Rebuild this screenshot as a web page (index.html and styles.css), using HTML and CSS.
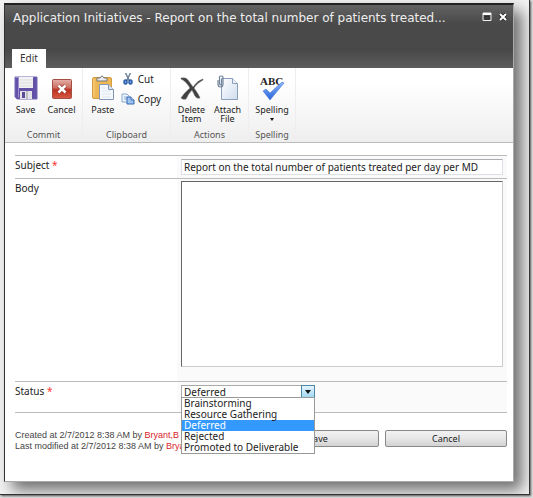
FILE: index.html
```html
<!DOCTYPE html>
<html lang="en">
<head>
<meta charset="utf-8">
<title>Application Initiatives</title>
<link rel="stylesheet" href="styles.css">
</head>
<body>
<div class="frame">
<main class="dialog">
  <header class="header">
    <div class="titlebar">
      <h1 class="title">Application Initiatives - Report on the total number of patients treated...</h1>
      <button class="winbtn" type="button" aria-label="Maximize"><svg width="10" height="10" viewBox="0 0 10 10"><path d="M1 1h8v7.500h-8z" fill="#444" stroke="#eee"/><path d="M1 2h8" stroke="#fff" stroke-width="2"/><path d="M3 4.500h4v2.500h-4z" fill="none" stroke="#222" stroke-width=".7"/></svg></button>
      <button class="winbtn" type="button" aria-label="Close"><svg width="10" height="10" viewBox="0 0 10 10"><path d="M2 2l6 6M8 2L2 8" stroke="#222" stroke-width="3.500"/><path d="M2 2l6 6M8 2L2 8" stroke="#fff" stroke-width="2"/></svg></button>
    </div>
    <nav class="tabs"><a class="tab" href="#ribbon">Edit</a></nav>
  </header>

  <section class="ribbon" id="ribbon">
    <div class="group commit">
      <div class="tools">
        <button class="tool" type="button">
          <svg width="24" height="24" viewBox="0 0 24 24"><path d="M1 1h22v22H3l-2-2z" fill="#6251a6" stroke="#7567b4"/><path d="M5 1h14v11H5z" fill="#f2f2f4"/><path d="M5 4h14M5 7h14M5 10h14" stroke="#ddd"/><path d="M1.500 1.500h3v20" fill="none" stroke="#9c90cf"/><path d="M6 15h12v8H6z" fill="#e4e3ea"/><path d="M8 16h3v6H8z" fill="#5d4b99"/><path d="M13 15v8" stroke="#999"/></svg>
          <span>Save</span></button>
        <button class="tool" type="button">
          <svg width="24" height="24" viewBox="0 0 24 24"><defs><linearGradient id="red" x2="0" y2="1"><stop stop-color="#e5afa7"/><stop offset=".42" stop-color="#ce7064"/><stop offset=".55" stop-color="#bd3020"/><stop offset="1" stop-color="#d75a45"/></linearGradient></defs><rect x="2.500" y="3.500" width="19" height="19" rx="1" fill="url(#red)" stroke="#a44d43"/><path d="M8.500 9.500l7 7M15.500 9.500l-7 7" stroke="#9b3025" stroke-width="4"/><path d="M8.500 9.500l7 7M15.500 9.500l-7 7" stroke="#fff" stroke-width="2.500"/></svg>
          <span>Cancel</span></button>
      </div>
      <h2 class="caption">Commit</h2>
    </div>
    <div class="group clipboard">
      <div class="tools">
        <button class="tool" type="button">
          <svg width="24" height="26" viewBox="0 0 24 26"><rect x="1.500" y="2.500" width="19" height="21" rx="1.500" fill="#edb755" stroke="#d79c3c"/><path d="M3 4v18" stroke="#f7d68c"/><path d="M6 3h3q2-4 4 0h3v3H6z" fill="#e8ecef" stroke="#777"/><path d="M8.500 9.500h9l5 5v10h-14z" fill="#f5f8fc" stroke="#8396b3"/><path d="M17.500 9.500v5h5" fill="#dbe5f0" stroke="#8396b3"/><path d="M11 13h4M11 16h9M11 19h9M11 22h9" stroke="#dfe6ef"/></svg>
          <span>Paste</span></button>
        <div class="small-tools">
          <button class="small" type="button"><svg width="14" height="12" viewBox="0 0 14 12"><path d="M4.500 0l4 8M9.500 0l-4 8" stroke="#718096" stroke-width="1.500"/><ellipse cx="4.500" cy="9" rx="1.500" ry="2" fill="#7ea3d8" stroke="#285aa8" stroke-width="1.500"/><ellipse cx="9.500" cy="9" rx="1.500" ry="2" fill="#7ea3d8" stroke="#285aa8" stroke-width="1.500"/></svg><span>Cut</span></button>
          <button class="small" type="button"><svg width="14" height="12" viewBox="0 0 14 12"><path d="M1 1h5l2 2v6H1z" fill="#edf4fc" stroke="#8aaad0"/><path d="M3 4h3M3 6h3" stroke="#8baddb"/><path d="M6 4h4l3 3v4H6z" fill="#9fc4f2" stroke="#3468b2"/><path d="M10 4v3h3" fill="#eaf3ff" stroke="#3468b2"/></svg><span>Copy</span></button>
        </div>
      </div>
      <h2 class="caption">Clipboard</h2>
    </div>
    <div class="group actions">
      <div class="tools">
        <button class="tool" type="button">
          <svg width="24" height="24" viewBox="0 0 24 24"><path d="M1 2q5-1 7 2l5 7Q18 4 23 3v1q-6 3-9 8 5 7 6 10-3 1-5-2l-3-6q-4 4-6 9-3 1-5-1Q4 17 10 12 6 5 1 3z" fill="#414141" stroke="#666" stroke-width=".5"/></svg>
          <span>Delete<br>Item</span></button>
        <button class="tool" type="button">
          <svg width="24" height="26" viewBox="0 0 24 26"><defs><linearGradient id="paper" x2="1" y2="1"><stop stop-color="#fff"/><stop offset="1" stop-color="#cfdced"/></linearGradient></defs><path d="M5.500 3.500h11l5 5v16h-16z" fill="url(#paper)" stroke="#8b9ebc"/><path d="M16.500 3.500v5h5" fill="#edf3fa" stroke="#8b9ebc"/><path d="M2 5v4q0 3 2.500 3T7 9V3Q7 1 5 1T3.500 3v5q0 2 1 2t1-2V4" fill="none" stroke="#70849a" stroke-width="1.200"/></svg>
          <span>Attach<br>File</span></button>
      </div>
      <h2 class="caption">Actions</h2>
    </div>
    <div class="group spelling">
      <div class="tools">
        <button class="tool" type="button">
          <svg width="26" height="26" viewBox="0 0 26 26"><defs><linearGradient id="blue" x2="0" y2="1"><stop stop-color="#8bb8fb"/><stop offset="1" stop-color="#2763db"/></linearGradient></defs><text x="1" y="10" class="abc">ABC</text><path d="M4 16l3-2 4 4L23 7l2 1-14 17z" fill="url(#blue)" stroke="#4d7bd1" stroke-width=".6"/></svg>
          <span>Spelling</span><i class="arrow"></i></button>
      </div>
      <h2 class="caption">Spelling</h2>
    </div>
  </section>

  <form class="form">
    <div class="row">
      <label for="subject">Subject <b>*</b></label>
      <div class="field"><input id="subject" type="text" value="Report on the total number of patients treated per day per MD"></div>
    </div>
    <div class="row body-row">
      <label for="body">Body</label>
      <div class="field"><textarea id="body"></textarea></div>
    </div>
    <div class="row status-row">
      <label for="status">Status <b>*</b></label>
      <div class="field">
        <div class="combo">
          <select id="status"><option>Brainstorming</option><option>Resource Gathering</option><option selected>Deferred</option><option>Rejected</option><option>Promoted to Deliverable</option></select>
          <span class="drop"><i class="arrow"></i></span>
          <ul class="menu" role="listbox" aria-label="Status">
            <li role="option">Brainstorming</li>
            <li role="option">Resource Gathering</li>
            <li role="option" class="selected" aria-selected="true">Deferred</li>
            <li role="option">Rejected</li>
            <li role="option">Promoted to Deliverable</li>
          </ul>
        </div>
      </div>
    </div>
    <div class="footer">
      <p class="meta">Created at 2/7/2012 8:38 AM by <a href="#author">Bryant,B</a><br>Last modified at 2/7/2012 8:38 AM by <a href="#author">Brya</a></p>
      <button class="push" type="button">Save</button>
      <button class="push" type="button">Cancel</button>
    </div>
  </form>
</main>
</div>
</body>
</html>
```
FILE: styles.css
```css
* { box-sizing: border-box; }

body {
  margin: 0;
  padding: 0 3px 3px 0;
  min-height: 100vh;
  display: flex;
  background: #dedede;
  color: #222;
  font: 10px/11px "Noto Sans", Verdana, sans-serif;
  overflow: hidden;
}

button {
  font: inherit;
  color: inherit;
  border: 0;
  padding: 0;
  background: none;
}

a { text-decoration: none; }
svg { display: block; flex: none; }

.frame {
  flex: 1;
  display: flex;
  padding: 3px 15px 12px 4px;
  background: #f3f3f3;
  border-right: 1px solid #333;
  border-bottom: 1px solid #333;
  box-shadow: 1px 1px 2px #555;
  overflow: hidden;
}

.dialog {
  flex: 1;
  min-width: 0;
  display: flex;
  flex-direction: column;
  background: #fff;
  border: 1px solid #aaa;
  border-left-color: #333;
  border-top: 2px solid #222;
  box-shadow: 8px 8px 14px rgba(0, 0, 0, .55);
}

.header {
  height: 63px;
  display: flex;
  flex-direction: column;
  justify-content: space-between;
  background: linear-gradient(#626262, #494949 30%, #484848 70%, #5c5c5c);
}

.titlebar {
  display: flex;
  align-items: center;
  gap: 6px;
  padding: 2px 5px 0 8px;
}

.winbtn { padding-bottom: 3px; }

.title {
  flex: 1;
  margin: 0;
  color: #eee;
  font-family: "DejaVu Sans", Verdana, sans-serif;
  font-size: 12px;
  font-weight: 400;
  line-height: 22px;
  white-space: nowrap;
}

.tabs { display: flex; padding-left: 7px; }

.tab {
  padding: 0 8px;
  background: #fff;
  color: #333;
  font-size: 10px;
  line-height: 19px;
}

.ribbon {
  height: 75px;
  display: flex;
  background: linear-gradient(#fff 20%, #eee);
  border-bottom: 1px solid #bbb;
  font-size: 9px;
}

.group {
  display: flex;
  flex-direction: column;
  justify-content: space-between;
  border-right: 1px solid #eee;
}

.commit { width: 78px; }
.clipboard { width: 88px; }
.actions { width: 78px; }
.spelling { width: 47px; }

.tools {
  display: flex;
  justify-content: center;
  padding-top: 7px;
}

.clipboard .tools { padding-top: 5px; padding-right: 7px; }
.clipboard .tool { padding-top: 2px; }

.tool {
  width: 36px;
  display: flex;
  flex-direction: column;
  align-items: center;
  line-height: 9px;
}

.tool svg { height: 26px; }
.tool span { padding-top: 4px; }

.small-tools {
  display: flex;
  flex-direction: column;
  gap: 8px;
}

.small {
  display: flex;
  align-items: center;
  gap: 3px;
  font-size: 10px;
  line-height: 12px;
}

.arrow {
  border: 2px solid transparent;
  border-top: 3px solid #111;
  border-bottom: 0;
}

.tool .arrow { margin-top: 4px; }

.abc { font: bold 11px "Liberation Serif", serif; fill: #222; }

.caption {
  margin: 0;
  color: #555;
  font-size: 9px;
  font-weight: 400;
  line-height: 14px;
  text-align: center;
}

.form {
  flex: 1;
  display: flex;
  flex-direction: column;
  padding: 12px 6px 0 10px;
}

.row {
  display: flex;
  border-top: 1px solid #bbb;
}

.row label { width: 162px; padding-top: 4px; }
.row b { color: #f33; font-weight: 400; }

.field {
  flex: 1;
  display: flex;
  align-items: flex-start;
  padding: 3px 4px 3px 4px;
  background: #fafafa;
}

input, textarea {
  flex: 1;
  min-width: 0;
  font: inherit;
  color: inherit;
  background: #fff;
  border: 1px solid #dde1e7;
}

input {
  height: 16px;
  padding: 0 2px;
  border-top-color: #abadb3;
}

textarea {
  height: 186px;
  resize: none;
  border-color: #666 #ccc #ccc #666;
}

.body-row .field { padding: 2px 4px 14px; }

.status-row { border-bottom: 1px solid #bbb; }
.status-row .field { height: 30px; }

.combo {
  width: 134px;
  position: relative;
  display: flex;
}

select {
  flex: 1;
  height: 14px;
  padding: 0 2px;
  appearance: none;
  font: inherit;
  color: inherit;
  background: #fff;
  border: 1px solid #aaa;
  border-radius: 0;
}

.drop {
  position: absolute;
  top: 0;
  right: 0;
  width: 14px;
  height: 14px;
  display: flex;
  align-items: center;
  justify-content: center;
  background: linear-gradient(#e5f5fc, #9ed4ef);
  border: 1px solid #4b87a7;
  pointer-events: none;
}

.drop .arrow { border-width: 4px 3px 0; }

.menu {
  position: absolute;
  top: 12px;
  left: 0;
  width: 100%;
  z-index: 1;
  margin: 0;
  padding: 0;
  list-style: none;
  background: #fff;
  border: 1px solid #999;
}

.menu li { padding: 0 2px; }
.menu .selected { background: #39f; color: #fff; }

.footer {
  display: flex;
  gap: 6px;
  padding-top: 17px;
}

.meta {
  flex: 1;
  margin: 0;
  color: #444;
  font-family: "Liberation Sans", Arial, sans-serif;
  font-size: 9px;
  white-space: nowrap;
}

.meta a { color: #d8232a; }

.push {
  width: 122px;
  height: 17px;
  background: linear-gradient(#f2f2f2, #e8e8e8 45%, #d3d3d3);
  border: 1px solid #888;
  border-radius: 2px;
  font-size: 9px;
}
```
